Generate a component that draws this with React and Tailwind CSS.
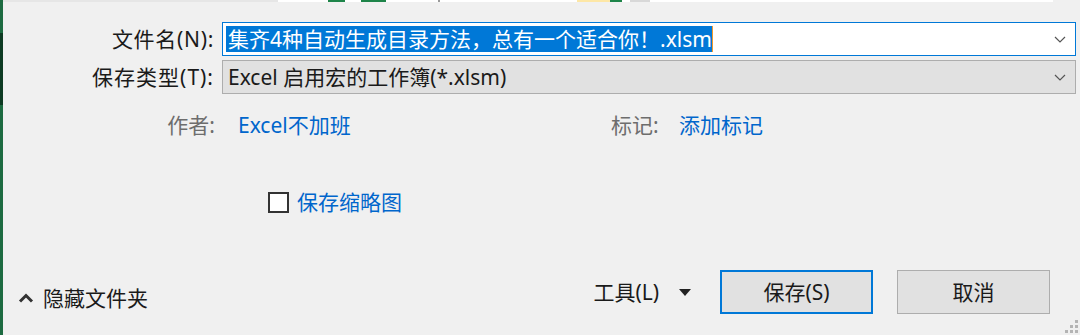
function ChevronDown() {
    return (
        <svg width="12" height="7" viewBox="0 0 12 7" className="shrink-0">
            <path d="M1 1 L6 6 L11 1" fill="none" stroke="#555" strokeWidth="1.2" />
        </svg>
    );
}

function ResizeGrip() {
    const dots = [
        [10, 0],
        [5, 5], [10, 5],
        [0, 10], [5, 10], [10, 10],
    ];
    return (
        <svg width="13" height="13" viewBox="0 0 13 13">
            {dots.map(([x, y], i) => (
                <rect key={i} x={x} y={y} width="3" height="3" fill="#b4b4b4" />
            ))}
        </svg>
    );
}

export default function App() {
    return (
        <div className="relative w-[1080px] h-[335px] overflow-hidden bg-[#f0f0f0] flex flex-col text-[21px] text-[#1a1a1a] font-['Noto_Sans','Noto_Sans_CJK_SC',sans-serif]">
            {/* 顶部窗口边缘 */}
            <div className="h-[2px] flex shrink-0">
                <div className="w-[3px] bg-[#1d6b41]" />
                <div className="w-[275px] bg-[#e6e6e6]" />
                <div className="flex-1 flex bg-white">
                    <div className="w-[50px]" />
                    <div className="w-[17px] bg-[#1e8449]" />
                    <div className="w-[16px]" />
                    <div className="w-[25px] bg-[#1e8449]" />
                    <div className="w-[52px]" />
                    <div className="w-[2px] bg-[#9a9a9a]" />
                    <div className="w-[137px]" />
                    <div className="w-[33px] bg-[#fde7a6]" />
                    <div className="w-[12px] bg-[#1e8449]" />
                    <div className="w-[8px]" />
                    <div className="w-[20px] bg-[#d8d8d8]" />
                </div>
                <div className="w-[27px] bg-[#f0f0f0]" />
            </div>

            <div className="flex flex-1">
                {/* 左侧绿色边 */}
                <div className="w-[3px] flex flex-col shrink-0">
                    <div className="h-[31px] bg-[#1d6b41]" />
                    <div className="h-[72px] bg-[#0e3b23]" />
                    <div className="flex-1 bg-[#1d6b41]" />
                </div>

                <div className="flex-1 flex flex-col">
                    {/* 文件名 */}
                    <div className="flex items-center mt-[20px]">
                        <div className="w-[211px] text-right leading-[28px] tracking-[0.7px]">文件名(N):</div>
                        <div className="ml-[8px] w-[854px] h-[34px] border border-[#0078d7] bg-white flex items-center pl-[3px] pr-[9px]">
                            <span className="bg-[#0078d7] text-white leading-[26px] pl-[2px]">
                                集齐4种自动生成目录方法，总有一个适合你！.xlsm
                            </span>
                            <span className="w-[1px] h-[26px] bg-[#f39a2b]" />
                            <div className="flex-1" />
                            <ChevronDown />
                        </div>
                    </div>

                    {/* 保存类型 */}
                    <div className="flex items-center mt-[4px]">
                        <div className="w-[211px] text-right leading-[28px] tracking-[1px]">保存类型(T):</div>
                        <div className="ml-[8px] w-[854px] h-[34px] border border-[#adadad] bg-[#e1e1e1] flex items-center pl-[5px] pr-[9px]">
                            <span className="leading-[28px]">Excel 启用宏的工作簿(*.xlsm)</span>
                            <div className="flex-1" />
                            <ChevronDown />
                        </div>
                    </div>

                    {/* 作者 / 标记 */}
                    <div className="flex items-center mt-[17px] leading-[28px]">
                        <div className="w-[212px] text-right text-[#6d6d6d]">作者:</div>
                        <div className="ml-[23px] w-[373px] text-[#0066cc]">Excel不加班</div>
                        <div className="w-[48px] text-[#6d6d6d]">标记:</div>
                        <div className="ml-[20px] text-[#0066cc]">添加标记</div>
                    </div>

                    {/* 保存缩略图 */}
                    <div className="flex items-center mt-[49px] pl-[265px] leading-[28px]">
                        <div className="w-[21px] h-[21px] border-2 border-[#333] bg-white" />
                        <div className="ml-[8px] text-[#0066cc]">保存缩略图</div>
                    </div>

                    {/* 底部按钮 */}
                    <div className="flex items-center mt-[54px] pr-[30px]">
                        <div className="flex items-center mt-[12px] ml-[15px]">
                            <svg width="16" height="10" viewBox="0 0 16 10">
                                <path d="M2 8.5 L8 2.5 L14 8.5" fill="none" stroke="#333" strokeWidth="3" />
                            </svg>
                            <span className="ml-[9px] leading-[28px]">隐藏文件夹</span>
                        </div>
                        <div className="flex-1" />
                        <span className="leading-[28px]">工具(L)</span>
                        <svg width="12" height="7" viewBox="0 0 12 7" className="ml-[20px]">
                            <path d="M0 0 L12 0 L6 7 Z" fill="#222" />
                        </svg>
                        <button className="ml-[29px] w-[153px] h-[44px] border-2 border-[#0078d7] bg-[#e1e1e1] leading-[28px]">
                            保存(S)
                        </button>
                        <button className="ml-[24px] w-[153px] h-[44px] border border-[#adadad] bg-[#e1e1e1] leading-[28px]">
                            取消
                        </button>
                    </div>
                </div>
            </div>

            <div className="absolute right-[2px] bottom-[2px]">
                <ResizeGrip />
            </div>
        </div>
    );
}
